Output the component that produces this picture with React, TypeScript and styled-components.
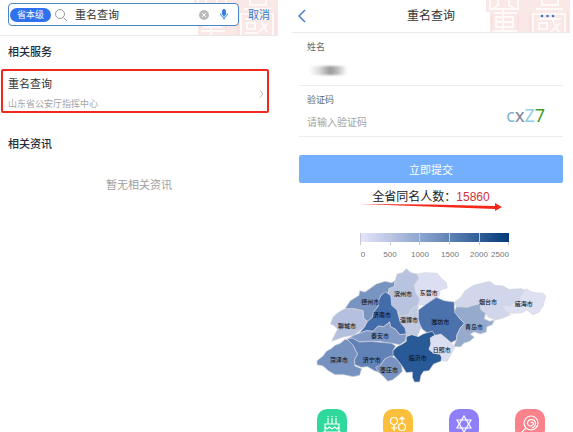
import React from "react";
import styled, { createGlobalStyle } from "styled-components";

const Global = createGlobalStyle`
  * { box-sizing: border-box; }
  body { margin: 0; background: #fff; font-family: "Liberation Sans", "Noto Sans CJK SC", sans-serif; color: #333; }
  h1, h2, p { margin: 0; font-weight: 400; }
  button { font-family: inherit; border: 0; padding: 0; background: none; cursor: pointer; }
  input { font-family: inherit; border: 0; padding: 0; background: none; outline: none; min-width: 0; }
  svg { display: block; }
`;

const Page = styled.div`
  display: grid;
  grid-template-columns: 1fr 1fr;
  gap: 14px;
  padding-right: 3px;
  height: 100vh;
  overflow: hidden;
`;
const Screen = styled.section`
  min-width: 0;
`;
const TopBar = styled.header<{ $height: number; $left: number; $right: number }>`
  position: relative;
  display: flex;
  align-items: center;
  height: ${(p) => p.$height}px;
  border-bottom: 1px solid #e9e9e9;
  padding: 0 ${(p) => p.$right}px 0 ${(p) => p.$left}px;
  overflow: hidden;
`;
const Seal = styled.svg`
  position: absolute;
  right: 0;
  top: 0;
  width: 84px;
  height: 36px;
`;
const SearchBox = styled.form`
  position: relative;
  display: flex;
  align-items: center;
  flex: 1;
  min-width: 0;
  height: 23px;
  margin-bottom: 6px;
  padding: 0 10px 0 1px;
  border: 1px solid #4a86c4;
  border-radius: 4px;
  background: #fff;
`;
const Scope = styled.button`
  flex: none;
  width: 41px;
  height: 14px;
  border-radius: 7px;
  background: #2f72ee;
  color: #fff;
  font-size: 9px;
  line-height: 14px;
`;
const SearchInput = styled.input`
  flex: 1;
  margin-left: 7px;
  font-size: 11px;
  line-height: 16px;
  color: #333;
`;
const IconButton = styled.button<{ $left?: number }>`
  position: relative;
  flex: none;
  margin-left: ${(p) => p.$left ?? 0}px;
`;
const BackButton = styled(IconButton)`
  width: 24px;
`;
const Cancel = styled.button`
  position: relative;
  flex: none;
  margin: 0 0 6px 9px;
  font-size: 11px;
  line-height: 16px;
  white-space: nowrap;
  color: #3a78cc;
`;
const SectionTitle = styled.h2`
  padding: 8px;
  font-size: 11px;
  font-weight: 500;
  line-height: 17px;
  color: #222c36;
`;
const ServiceLink = styled.a`
  display: flex;
  align-items: center;
  justify-content: space-between;
  margin: 0 9px 15px 1px;
  height: 44px;
  padding: 5px 3px 0 5px;
  border: 2px solid #f0281e;
  border-radius: 2px;
  color: #333;
  text-decoration: none;
`;
const ServiceName = styled.p`
  font-size: 11px;
  line-height: 20px;
`;
const ServiceOrg = styled.p`
  font-size: 9px;
  line-height: 20px;
  color: #a5a5a5;
`;
const Empty = styled.p`
  padding-top: 16px;
  text-align: center;
  font-size: 11px;
  line-height: 17px;
  color: #a0a0a0;
`;

const Title = styled.h1`
  position: relative;
  flex: 1;
  text-align: center;
  font-size: 12px;
  line-height: 18px;
`;
const Form = styled.form`
  padding: 0 7px;
`;
const Field = styled.div<{ $height: number }>`
  display: grid;
  grid-template-columns: 1fr auto;
  align-content: start;
  height: ${(p) => p.$height}px;
  padding: 7px 18px 0 8px;
  border-bottom: 1px solid #ececec;
`;
const Label = styled.label`
  font-size: 9px;
  line-height: 15px;
  color: #666;
`;
const FieldInput = styled.input`
  grid-column: 1;
  height: 16px;
  margin-top: 6px;
  font-size: 10px;
  color: #333;
  &::placeholder { color: #a3a3a3; opacity: 1; }
`;
const Masked = styled.span`
  grid-column: 1;
  width: 40px;
  height: 9px;
  margin-top: 11px;
  background: linear-gradient(90deg, #fff 5%, #ddd 30%, #999 58%, #bbb 75%, #fff);
  filter: blur(1px);
`;
const Captcha = styled.button`
  grid-column: 2;
  grid-row: 1 / span 2;
  align-self: center;
  margin-top: 6px;
  font-family: "Noto Sans", sans-serif;
  font-size: 18px;
  line-height: 24px;
`;
const Glyph = styled.span<{ $color: string }>`
  color: ${(p) => p.$color};
`;
const Submit = styled.button`
  display: block;
  width: 100%;
  height: 28px;
  margin-top: 18px;
  border-radius: 2px;
  background: #73affc;
  color: #fff;
  font-size: 11px;
`;
const Result = styled.p`
  margin-top: 5px;
  text-align: center;
  font-size: 12px;
  line-height: 18px;
  color: #222;
`;
const Count = styled.span`
  color: #cf3440;
`;
const Arrow = styled.svg`
  width: 142px;
  height: 8px;
  margin: -3px auto 22px;
`;
const Scale = styled.svg`
  width: 164px;
  height: 28px;
  margin: 0 auto;
  text { font-size: 8px; fill: #777; text-anchor: middle; }
`;
const MapChart = styled.svg`
  width: 240px;
  height: 120px;
  margin: 5px auto 0;
  path { stroke: #d3d5dc; stroke-width: 2; stroke-linejoin: round; }
  text { font-size: 18px; font-weight: 500; fill: #10141c; text-anchor: middle; }
`;
const Shortcuts = styled.nav`
  display: grid;
  grid-template-columns: repeat(4, 1fr);
  justify-items: center;
  padding: 23px 7px 0;
`;
const Shortcut = styled.a<{ $color: string }>`
  width: 30px;
  height: 30px;
  border-radius: 10px;
  background: ${(p) => p.$color};
  svg { width: 30px; height: 30px; fill: none; stroke: #fff; stroke-width: 1.2; }
`;

const SealArt = () => (
  <Seal viewBox="0 0 84 36" fill="none" aria-hidden="true">
    <path d="M0 0h42v12H0zM4 12h38v24H4zM42 0h42v36H42z" fill="#fae8e6" />
    <g stroke="#fffafa" strokeWidth="2">
      <path d="M4 0v9h28V0M12 0v5l-5 4M23 0v5l6 4M8 13h23M17 10v26M10 17h17v5H10zM10 22h17v5H10zM5 31h28" />
      <path d="M50 9h27M56 0v5h16V0M47 36V14h32v22M51 19h24M53 23h8v6h-8zM65 17l8 15M74 23l-9 9M51 33h13" />
      <path d="M0 16v20" />
    </g>
    <path d="M6 15v18M32 15v18M44 12v24M82 12v24" stroke="#f6dad8" />
  </Seal>
);

const cities = [
  { name: "德州市", x: 182, y: 117, fill: "#7894c0", d: "M106 132L122 108L148 92L150 78L166 82L200 58L226 50L246 54L256 48L254 66L238 72L236 84L216 90L208 104L206 124L192 142L188 158L174 170L162 162L160 138L132 132Z" },
  { name: "滨州市", x: 280, y: 94, fill: "#b8c3df", d: "M256 48L262 28L278 24L290 12L304 24L322 28L328 42L314 60L318 84L330 102L326 122L308 130L296 150L274 156L262 136L246 122L244 98L236 86L238 72L254 66Z" },
  { name: "东营市", x: 357, y: 90, fill: "#dcdff2", d: "M322 28L346 24L382 26L394 40L410 54L412 70L392 76L388 94L368 106L350 120L330 122L330 102L318 84L314 60L328 42Z" },
  { name: "聊城市", x: 112, y: 189, fill: "#b4c0dd", d: "M106 132L132 132L160 138L162 162L174 170L164 188L146 202L132 212L104 216L82 224L66 230L76 208L84 194L72 182L62 178L70 158L84 144Z" },
  { name: "淄博市", x: 298, y: 171, fill: "#c1cae3", d: "M262 136L274 156L296 150L308 130L326 122L324 140L326 164L338 180L332 194L322 216L306 210L290 216L286 190L272 174Z" },
  { name: "济南市", x: 217, y: 158, fill: "#436caa", d: "M216 90L228 82L242 92L244 98L246 122L262 136L272 174L286 190L290 208L270 210L258 194L242 186L240 172L222 186L206 184L190 200L170 198L148 206L164 188L174 170L188 158L192 142L206 124L208 104Z" },
  { name: "潍坊市", x: 392, y: 178, fill: "#4b72ac", d: "M326 136L350 118L368 106L380 98L404 108L434 112L434 134L450 162L464 176L452 190L442 210L440 226L424 234L410 222L394 210L378 214L368 202L352 204L338 194L330 178L326 164Z" },
  { name: "烟台市", x: 535, y: 118, fill: "#d2d6eb", d: "M434 112L452 100L466 78L492 62L522 54L540 50L556 62L580 64L598 74L636 72L660 82L676 84L664 104L654 114L634 116L604 124L578 124L594 136L602 150L580 160L558 166L536 158L528 146L514 136L510 118L492 122L474 128L440 126Z" },
  { name: "威海市", x: 642, y: 124, fill: "#dfe1f2", d: "M578 122L604 124L604 118L622 114L630 100L640 84L650 72L662 80L672 84L700 86L708 94L700 124L688 142L670 150L652 136L636 144L612 146L592 142Z" },
  { name: "青岛市", x: 493, y: 193, fill: "#96aace", d: "M440 126L474 128L492 122L510 118L514 136L528 146L524 162L540 170L554 166L548 180L532 186L530 202L512 208L494 202L482 208L494 218L480 230L462 236L454 246L432 246L440 226L442 210L452 190L464 176L450 162L434 142Z" },
  { name: "泰安市", x: 211, y: 220, fill: "#8199c5", d: "M132 212L148 206L170 198L190 200L206 184L222 186L240 172L242 186L258 194L270 210L290 208L288 228L270 240L246 236L228 234L208 230L184 230L170 230L150 232L124 220L114 222Z" },
  { name: "菏泽市", x: 88, y: 293, fill: "#7692c1", d: "M76 242L92 236L106 224L122 228L132 244L138 258L144 268L134 286L136 304L156 312L150 332L130 336L102 330L76 330L56 318L40 304L22 300L22 288L40 274L50 260L64 252Z" },
  { name: "济宁市", x: 186, y: 293, fill: "#6082b7", d: "M112 222L128 220L150 232L184 230L228 234L246 236L258 244L250 258L254 270L244 280L226 282L214 300L206 314L212 324L194 318L174 306L154 308L136 300L134 286L144 268L138 258L132 244Z" },
  { name: "枣庄市", x: 238, y: 323, fill: "#7893c1", d: "M226 282L244 274L260 282L276 302L278 320L264 334L248 346L234 350L222 336L206 322L198 308L214 300Z" },
  { name: "临沂市", x: 324, y: 287, fill: "#285a98", d: "M290 216L306 210L326 216L340 208L352 204L368 200L376 212L362 220L364 238L358 254L372 266L390 268L396 278L394 290L372 298L358 318L342 320L334 332L330 352L314 352L308 338L308 322L290 324L276 302L260 282L250 270L250 258L262 246L278 238L290 230Z" },
  { name: "日照市", x: 396, y: 262, fill: "#dadef0", d: "M376 212L394 208L410 222L424 234L436 246L428 262L420 276L412 290L396 288L398 272L390 268L372 266L358 254L364 238L362 220Z" },
];

const ticks = [["0", 6], ["500", 33], ["1000", 63], ["1500", 93], ["2000", 122], ["2500", 143]] as const;

export default function App() {
  return (
    <>
      <Global />
      <Page lang="zh-CN">
        <Screen>
          <TopBar $height={36} $left={8} $right={8}>
            <SealArt />
            <SearchBox>
              <Scope type="button">省本级</Scope>
              <IconButton $left={3} type="submit" aria-label="搜索">
                <svg width="14" height="14" fill="none" stroke="#999"><circle cx="6" cy="6" r="4.5" /><path d="M9.5 9.5L13 13" /></svg>
              </IconButton>
              <SearchInput aria-label="搜索内容" defaultValue="重名查询" />
              <IconButton type="button" aria-label="清除">
                <svg width="10" height="10"><circle cx="5" cy="5" r="5" fill="#bbb" /><path d="M3.2 3.2l3.6 3.6M6.8 3.2L3.2 6.8" stroke="#fff" /></svg>
              </IconButton>
              <IconButton $left={11} type="button" aria-label="语音">
                <svg width="8" height="11" fill="none" stroke="#3b7fe0"><rect x="2.5" y=".5" width="3" height="6" rx="1.5" fill="#3b7fe0" /><path d="M.7 4.5c0 5 6.6 5 6.6 0M4 8v3" /></svg>
              </IconButton>
            </SearchBox>
            <Cancel type="button">取消</Cancel>
          </TopBar>
          <SectionTitle>相关服务</SectionTitle>
          <ServiceLink href="#service">
            <div>
              <ServiceName>重名查询</ServiceName>
              <ServiceOrg>山东省公安厅指挥中心</ServiceOrg>
            </div>
            <svg width="5" height="8" fill="none" stroke="#bbb"><path d="M1 .5L4 4L1 7.5" /></svg>
          </ServiceLink>
          <SectionTitle>相关资讯</SectionTitle>
          <Empty>暂无相关资讯</Empty>
        </Screen>

        <Screen>
          <TopBar $height={33} $left={6} $right={15}>
            <SealArt />
            <BackButton type="button" aria-label="返回">
              <svg width="8" height="14" fill="none" stroke="#3b76c8" strokeWidth="1.4"><path d="M7 1L1 7l6 6" /></svg>
            </BackButton>
            <Title>重名查询</Title>
            <IconButton type="button" aria-label="更多">
              <svg width="15" height="4" fill="#3b76c8"><circle cx="2" cy="2" r="1.3" /><circle cx="7.5" cy="2" r="1.3" /><circle cx="13" cy="2" r="1.3" /></svg>
            </IconButton>
          </TopBar>
          <Form>
            <Field $height={53}>
              <Label as="span">姓名</Label>
              <Masked />
            </Field>
            <Field $height={51}>
              <Label htmlFor="code">验证码</Label>
              <FieldInput id="code" placeholder="请输入验证码" />
              <Captcha type="button">
                <Glyph $color="#7eb6d4">c</Glyph><Glyph $color="#7a7f9c">x</Glyph><Glyph $color="#8ed0e8">Z</Glyph><Glyph $color="#3f9a2c">7</Glyph>
              </Captcha>
            </Field>
            <Submit type="button">立即提交</Submit>
          </Form>
          <Result>全省同名人数：<Count>15860</Count></Result>
          <Arrow viewBox="0 0 142 8" fill="#f5281c"><path d="M0 1L70 1.500L135 3V0L142 4L135 8V6L80 4Z" /></Arrow>
          <Scale viewBox="-8 0 164 28">
            <defs>
              <linearGradient id="ramp"><stop offset="0" stopColor="#e6e6fa" /><stop offset=".5" stopColor="#7795c3" /><stop offset="1" stopColor="#023a78" /></linearGradient>
            </defs>
            <rect x="3" width="149" height="9" fill="url(#ramp)" />
            <path d="M3.5 0v12M33.5 0v12M62.5 0v12M92.5 0v12M122.5 0v12M151.5 9v3" stroke="#c3c8d4" />
            {ticks.map(([t, x]) => <text key={t} x={x} y="24">{t}</text>)}
          </Scale>
          <MapChart viewBox="4 4 720 360" role="img" aria-label="全省同名人数分布">
            {cities.map((c) => <path key={c.name} d={c.d} fill={c.fill} />)}
            {cities.map((c) => <text key={c.name} x={c.x} y={c.y}>{c.name}</text>)}
          </MapChart>
          <Shortcuts>
            <Shortcut $color="#2fd99b" href="#birthday" aria-label="生日">
              <svg viewBox="0 0 30 30"><path d="M8 24v-9h14v9M8 18l2 2 2.5-2 2.5 2 2.5-2 2.5 2 2-2M11 15V9M15 15V9M19 15V9M11 7v1M15 7v1M19 7v1M6 23h18" /></svg>
            </Shortcut>
            <Shortcut $color="#fcbf3c" href="#gender" aria-label="性别">
              <svg viewBox="0 0 30 30"><circle cx="11" cy="12" r="3.5" /><path d="M11 15.5V22M8 19h6" /><circle cx="19" cy="18" r="3.5" /><path d="M19 14.5V8M16.5 10.5L19 8l2.5 2.5" /></svg>
            </Shortcut>
            <Shortcut $color="#8f80fa" href="#zodiac" aria-label="星座">
              <svg viewBox="0 0 30 30"><path d="M15 7l7 12H8zM15 23L8 11h14z" /></svg>
            </Shortcut>
            <Shortcut $color="#fb818b" href="#surname" aria-label="姓氏">
              <svg viewBox="0 0 30 30"><circle cx="16" cy="14" r="7" /><path d="M11 19l-5 5M16 14c1-2 3 0 2 1.5-2 3-6 1-5.5-2 1-4 7-4 8 0 0 3-1 5-4 5.500" /></svg>
            </Shortcut>
          </Shortcuts>
        </Screen>
      </Page>
    </>
  );
}
